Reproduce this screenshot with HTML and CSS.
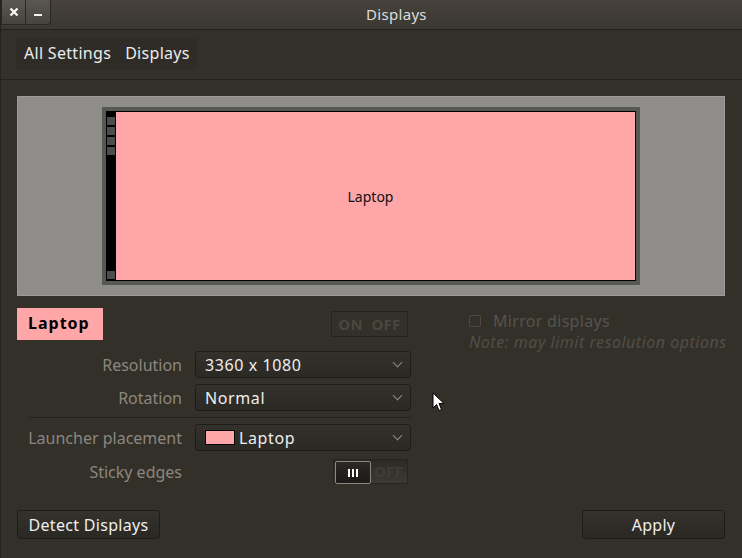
FILE: index.html
```html
<!DOCTYPE html>
<html lang="en">
<head>
  <meta charset="UTF-8">
  <title>Displays</title>
  <link rel="stylesheet" href="styles.css">
</head>
<body>
  <div class="window">
    <!-- title bar -->
    <header class="titlebar">
      <div class="win-btns">
        <button class="win-btn close">
          <svg width="10" height="10" viewBox="0 0 10 10"><path d="M1.5 1.5 L8.5 8.5 M8.5 1.5 L1.5 8.5" stroke="#f4f4f4" stroke-width="2.4"/></svg>
        </button>
        <button class="win-btn min">
          <svg width="8" height="10" viewBox="0 0 8 10"><rect x="0" y="7" width="8" height="2" fill="#f4f4f4"/></svg>
        </button>
      </div>
      <h1 class="win-title">Displays</h1>
    </header>

    <!-- breadcrumb -->
    <nav class="toolbar">
      <a href="#" class="crumb">All Settings</a>
      <a href="#" class="crumb">Displays</a>
    </nav>

    <main class="content">
      <div class="preview">
        <div class="monitor">
          <div class="launcher">
            <span class="lnc-icon"></span>
            <span class="lnc-icon"></span>
            <span class="lnc-icon"></span>
            <span class="lnc-icon"></span>
            <span class="lnc-fill"></span>
            <span class="lnc-icon"></span>
          </div>
          <div class="screen">Laptop</div>
        </div>
      </div>

      <div class="settings">
        <div class="col-left">
          <div class="head-row">
            <span class="output-name">Laptop</span>
            <span class="onoff">ON&nbsp; OFF</span>
          </div>

          <div class="form">
            <label class="form-label">Resolution</label>
            <div class="combo"><span>3360 x 1080</span><i class="chev"></i></div>

            <label class="form-label">Rotation</label>
            <div class="combo"><span>Normal</span><i class="chev"></i></div>

            <hr class="sep">

            <label class="form-label">Launcher placement</label>
            <div class="combo"><span class="swatch"></span><span>Laptop</span><i class="chev"></i></div>

            <label class="form-label sticky">Sticky edges</label>
            <div class="switch-wrap">
              <span class="switch">
                <span class="knob"><i></i><i></i><i></i></span>
                <span class="switch-off">OFF</span>
              </span>
            </div>
          </div>
        </div>

        <div class="col-right">
          <div class="mirror">
            <span class="check"></span>
            <span>Mirror displays</span>
          </div>
          <p class="note">Note: may limit resolution options</p>
        </div>
      </div>

      <div class="actions">
        <button class="btn">Detect Displays</button>
        <button class="btn apply">Apply</button>
      </div>
    </main>

    <!-- mouse pointer -->
    <svg class="cursor" width="13" height="20" viewBox="0 0 13 20">
      <path d="M1 1 L1 16 L4.5 12.5 L7 18.5 L9.5 17.5 L7 11.5 L12 11.5 Z" fill="#fff" stroke="#000" stroke-width="1"/>
    </svg>
  </div>
</body>
</html>
```

FILE: styles.css
```css
* {
  margin: 0;
  padding: 0;
  box-sizing: border-box;
}
body {
  width: 742px;
  height: 558px;
  background-color: #33302a;
  font-family: "Noto Sans", "DejaVu Sans", sans-serif;
  letter-spacing: 0.3px;
  overflow: hidden;
}
button {
  font-family: inherit;
  letter-spacing: inherit;
  cursor: pointer;
}
a {
  text-decoration: none;
}

.window {
  position: relative;
  width: 742px;
  height: 558px;
  display: flex;
  flex-direction: column;
  border-left: 1px solid #24221e;
}

/* title bar */
.titlebar {
  display: flex;
  height: 30px;
  background: linear-gradient(#47433c, #3b3731);
  border-bottom: 1px solid #24221e;
}
.win-btns {
  display: flex;
  height: 25px;
}
.win-btn {
  display: flex;
  align-items: center;
  justify-content: center;
  width: 25px;
  height: 25px;
  border: 1px solid #2a2824;
  border-top: 0;
  background: linear-gradient(#5a5750, #47443e);
}
.win-btn.min {
  border-left: 0;
  border-bottom-right-radius: 4px;
}
.win-title {
  flex: 1;
  text-align: center;
  font-size: 15px;
  font-weight: normal;
  color: #dcdcdc;
  line-height: 29px;
}

/* breadcrumb */
.toolbar {
  display: flex;
  height: 50px;
  padding: 8px 0 0 15px;
  border-bottom: 1px solid #24221e;
}
.crumb {
  height: 32px;
  padding: 0 7px 0 8px;
  background-color: #2f2c27;
  border-radius: 3px;
  color: #ececec;
  font-size: 16px;
  line-height: 31px;
}
.crumb + .crumb {
  padding-left: 7px;
}

/* content */
.content {
  flex: 1;
  display: flex;
  flex-direction: column;
  padding: 16px 17px 19px 16px;
}
.preview {
  height: 200px;
  display: flex;
  align-items: center;
  justify-content: center;
  background-color: #8e8d89;
  border: 1px solid #9c9b97;
}
.monitor {
  display: flex;
  width: 538px;
  height: 178px;
  border: 4px solid #575755;
  background-color: #000;
  padding: 1px;
  padding-left: 0;
}
.launcher {
  width: 10px;
  display: flex;
  flex-direction: column;
  padding: 5px 0 1px 1px;
  gap: 2px;
}
.lnc-icon {
  width: 8px;
  height: 8px;
  background-color: #4d4d4d;
}
.lnc-fill {
  flex: 1;
}
.screen {
  flex: 1;
  display: flex;
  align-items: center;
  justify-content: center;
  padding-right: 10px;
  background-color: #ffa6a8;
  font-size: 14px;
  letter-spacing: 0;
  color: #111;
}

/* settings */
.settings {
  display: flex;
  margin-top: 12px;
}
.col-left {
  width: 395px;
}
.head-row {
  display: flex;
  align-items: center;
  justify-content: space-between;
  height: 32px;
}
.output-name {
  width: 86px;
  height: 32px;
  padding-left: 11px;
  background-color: #ffa6a8;
  color: #000;
  font-size: 16px;
  font-weight: bold;
  line-height: 31px;
  letter-spacing: 1px;
}
.onoff {
  width: 77px;
  height: 26px;
  margin-right: 3px;
  border: 1px solid #25231f;
  color: #4a463f;
  font-size: 15px;
  font-weight: bold;
  text-align: center;
  line-height: 24px;
}

.form {
  display: grid;
  grid-template-columns: 165px 216px;
  column-gap: 13px;
  row-gap: 6px;
  align-items: center;
  margin-top: 11px;
}
.form-label {
  text-align: right;
  white-space: nowrap;
  color: #8b877f;
  font-size: 16px;
  letter-spacing: 0;
}
.combo {
  display: flex;
  align-items: center;
  height: 27px;
  padding: 0 9px;
  background: linear-gradient(#34312b, #2b2924);
  border: 1px solid #1f1d1a;
  border-radius: 3px;
  color: #eeeeee;
  font-size: 16px;
  letter-spacing: 0.6px;
}
.chev {
  margin-left: auto;
  width: 7px;
  height: 7px;
  border-right: 1.5px solid #8f8a80;
  border-bottom: 1.5px solid #8f8a80;
  transform: translateY(-2px) rotate(45deg);
}
.swatch {
  width: 30px;
  height: 15px;
  margin-right: 4px;
  background-color: #ffa6a8;
  border: 1px solid #000;
}
.sep {
  grid-column: 1 / 3;
  margin-left: 12px;
  border: 0;
  height: 1px;
  background-color: #24221e;
}
.sticky {
  margin-top: 2px;
}
.switch-wrap {
  display: flex;
  justify-content: flex-end;
  padding-right: 3px;
  margin-top: 2px;
}
.switch {
  display: flex;
  width: 75px;
  height: 25px;
  padding: 1px;
  background: linear-gradient(#2d2a25, #3c3932);
  border: 1px solid #26241f;
}
.knob {
  display: flex;
  align-items: center;
  justify-content: center;
  gap: 2px;
  width: 36px;
  height: 23px;
  background: linear-gradient(#2b2925, #1b1a17);
  border: 1px solid #8a877f;
  border-radius: 2px;
}
.knob i {
  width: 2px;
  height: 8px;
  background-color: #fff;
}
.switch-off {
  flex: 1;
  color: #403d36;
  font-size: 15px;
  font-weight: bold;
  text-align: center;
  line-height: 21px;
}

.col-right {
  margin-left: 58px;
  padding-top: 2px;
}
.mirror {
  display: flex;
  align-items: center;
  gap: 12px;
  color: #57534c;
  font-size: 16px;
}
.check {
  width: 12px;
  height: 12px;
  border: 1px solid #4b4842;
  border-radius: 1px;
}
.note {
  margin-top: -1px;
  color: #524e47;
  font-size: 16px;
  font-style: italic;
  letter-spacing: 0.5px;
  white-space: nowrap;
}

/* bottom buttons */
.actions {
  display: flex;
  justify-content: space-between;
  margin-top: auto;
}
.btn {
  width: 143px;
  height: 29px;
  background: linear-gradient(#35322c, #2a2823);
  border: 1px solid #1f1d1a;
  border-radius: 3px;
  color: #eeeeee;
  font-size: 16px;
}

.cursor {
  position: absolute;
  left: 431px;
  top: 392px;
}
```
